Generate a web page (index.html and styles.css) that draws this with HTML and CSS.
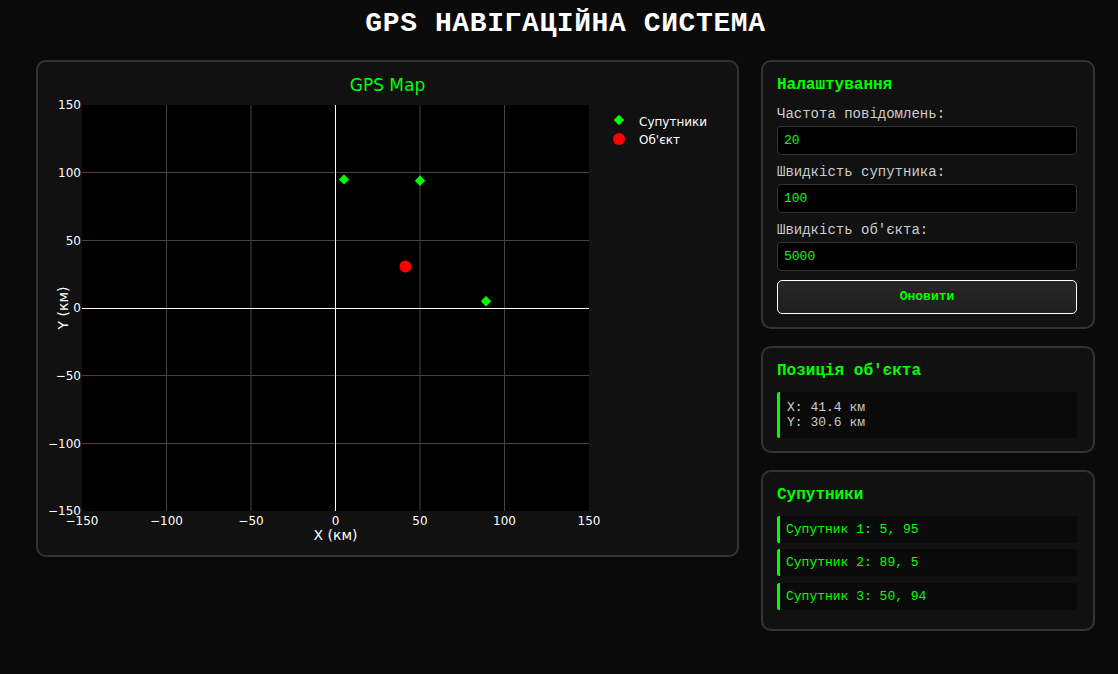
FILE: index.html
```html
<!DOCTYPE html>
<html lang="uk">
<head>
<meta charset="utf-8">
<title>GPS навігаційна система</title>
<link rel="stylesheet" href="styles.css">
</head>
<body>
<div class="page">
  <h1 class="title">GPS НАВІГАЦІЙНА СИСТЕМА</h1>
  <main class="layout">
    <section class="card map-card">
      <svg class="map-svg" width="699" height="493" viewBox="0 0 699 493" xmlns="http://www.w3.org/2000/svg">
        <text class="chart-title" x="349.5" y="29" text-anchor="middle">GPS Map</text>
        <rect x="44" y="43" width="507" height="406" fill="#000"/>
        <g class="grid">
          <line x1="128.5" y1="43" x2="128.5" y2="449"/>
          <line x1="213" y1="43" x2="213" y2="449"/>
          <line x1="382" y1="43" x2="382" y2="449"/>
          <line x1="466.5" y1="43" x2="466.5" y2="449"/>
          <line x1="44" y1="110.5" x2="551" y2="110.5"/>
          <line x1="44" y1="178.5" x2="551" y2="178.5"/>
          <line x1="44" y1="313.5" x2="551" y2="313.5"/>
          <line x1="44" y1="381.5" x2="551" y2="381.5"/>
        </g>
        <g class="zero">
          <line x1="297.5" y1="43" x2="297.5" y2="449"/>
          <line x1="44" y1="246.5" x2="551" y2="246.5"/>
        </g>
        <g class="ytick" text-anchor="end">
          <text x="43" y="47.4">150</text>
          <text x="43" y="115.1">100</text>
          <text x="43" y="182.7">50</text>
          <text x="43" y="250.4">0</text>
          <text x="43" y="318.1">−50</text>
          <text x="43" y="385.7">−100</text>
          <text x="43" y="453.4">−150</text>
        </g>
        <g class="xtick" text-anchor="middle">
          <text x="44" y="463">−150</text>
          <text x="128.5" y="463">−100</text>
          <text x="213" y="463">−50</text>
          <text x="297.5" y="463">0</text>
          <text x="382" y="463">50</text>
          <text x="466.5" y="463">100</text>
          <text x="551" y="463">150</text>
        </g>
        <text class="axis-title" x="297.5" y="477.5" text-anchor="middle">X (км)</text>
        <text class="axis-title" x="29.5" y="246" text-anchor="middle" transform="rotate(-90 29.5 246)">Y (км)</text>
        <g class="sat">
          <polygon points="306,112.2 311.2,117.4 306,122.6 300.8,117.4"/>
          <polygon points="448,234 453.2,239.2 448,244.4 442.8,239.2"/>
          <polygon points="382,113.6 387.2,118.8 382,124 376.8,118.8"/>
        </g>
        <circle cx="367.5" cy="204.6" r="6" fill="#ff0000"/>
        <g class="legend">
          <polygon class="sat-mark" points="581,52.8 586.2,58 581,63.2 575.8,58"/>
          <circle cx="581" cy="77" r="6" fill="#ff0000"/>
          <text x="601" y="63.7">Супутники</text>
          <text x="601" y="82.3">Об'єкт</text>
        </g>
      </svg>
    </section>
    <aside class="side">
      <section class="card panel">
        <h3 class="panel-title">Налаштування</h3>
        <label class="field-label" for="freq">Частота повідомлень:</label>
        <input class="field-input" id="freq" type="text" value="20">
        <label class="field-label" for="satspeed">Швидкість супутника:</label>
        <input class="field-input" id="satspeed" type="text" value="100">
        <label class="field-label" for="objspeed">Швидкість об'єкта:</label>
        <input class="field-input" id="objspeed" type="text" value="5000">
        <button class="btn" type="button">Оновити</button>
      </section>
      <section class="card panel">
        <h3 class="panel-title">Позиція об'єкта</h3>
        <div class="pos-box">
          <div>X: 41.4 км</div>
          <div>Y: 30.6 км</div>
        </div>
      </section>
      <section class="card panel">
        <h3 class="panel-title">Супутники</h3>
        <div class="sat-item">Супутник 1: 5, 95</div>
        <div class="sat-item">Супутник 2: 89, 5</div>
        <div class="sat-item">Супутник 3: 50, 94</div>
      </section>
    </aside>
  </main>
</div>
</body>
</html>
```
FILE: styles.css
```css
html, body {
  margin: 0;
  background: #0a0a0a;
}

body {
  color: #ccc;
  font-family: "Liberation Mono", "Courier New", monospace;
}

.page {
  padding: 8px 23px 0 36px;
}

.title {
  margin: 0 0 20px;
  font-size: 28px;
  line-height: 32px;
  font-weight: 700;
  color: #fff;
  text-align: center;
  letter-spacing: 0.6px;
}

.layout {
  display: flex;
  align-items: flex-start;
  gap: 22px;
}

.card {
  background: #111;
  border: 2px solid #333;
  border-radius: 10px;
}

.map-card {
  flex: 1;
  min-width: 0;
}

.map-svg {
  display: block;
  font-family: "DejaVu Sans", Verdana, sans-serif;
}

.chart-title {
  font-size: 17px;
  fill: #00ff00;
}

.grid line {
  stroke: #444;
  stroke-width: 1;
}

.zero line {
  stroke: #fff;
  stroke-width: 1;
}

.ytick text,
.xtick text {
  font-size: 12px;
  fill: #fff;
}

.axis-title {
  font-size: 14px;
  fill: #fff;
}

.sat polygon,
.sat-mark {
  fill: #00ff00;
}

.legend text {
  font-size: 12px;
  fill: #fff;
}

.side {
  width: 334px;
  flex-shrink: 0;
  display: flex;
  flex-direction: column;
  gap: 17.5px;
}

.panel {
  padding: 14px 16px 13px 14px;
}

.panel-title {
  margin: 0 0 11.5px;
  font-size: 16px;
  line-height: 18px;
  font-weight: 700;
  color: #00ff00;
}

.field-label {
  display: block;
  font-size: 14px;
  line-height: 17px;
  margin-bottom: 3px;
  color: #ccc;
}

.field-input {
  display: block;
  box-sizing: border-box;
  width: 100%;
  height: 29px;
  margin: 0 0 9px;
  padding: 0 6px;
  background: #000;
  border: 1px solid #333;
  border-radius: 4px;
  color: #00ff00;
  font-family: "Liberation Mono", "Courier New", monospace;
  font-size: 13px;
  outline: none;
}

.btn {
  display: block;
  box-sizing: border-box;
  width: 100%;
  height: 34px;
  padding: 0;
  background: linear-gradient(#272727, #1f1f1f);
  border: 1.5px solid #fff;
  border-radius: 5px;
  color: #00ff00;
  font-family: "Liberation Mono", "Courier New", monospace;
  font-size: 13px;
  font-weight: 700;
}

.pos-box {
  background: #0a0a0a;
  border-left: 3px solid #00ff00;
  border-radius: 2px;
  padding: 8px 7px;
  font-size: 13px;
  color: #ccc;
}

.sat-item {
  background: #0a0a0a;
  border-left: 3px solid #00ff00;
  border-radius: 2px;
  padding: 6px;
  margin-bottom: 6.5px;
  font-size: 13px;
  color: #00ff00;
}
```
